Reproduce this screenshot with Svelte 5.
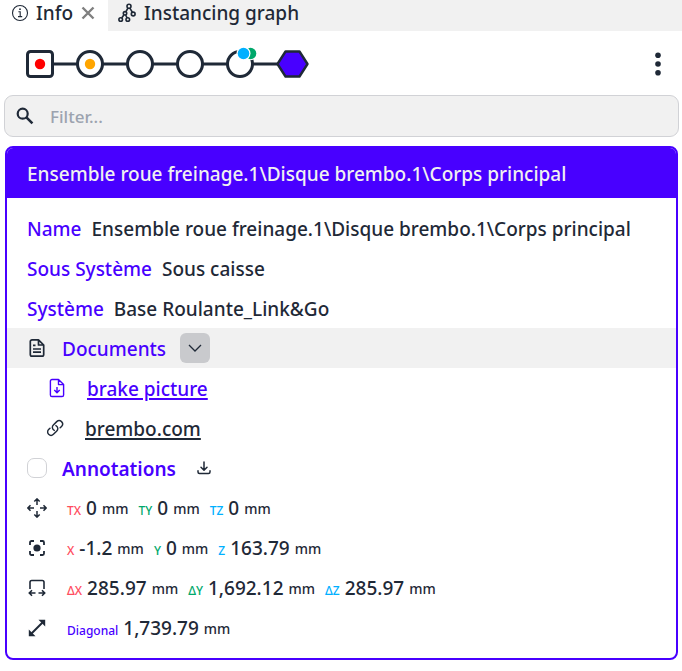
<script>
  let filter = $state('');
  let open = $state(true);
  let annotated = $state(false);

  const title = 'Ensemble roue freinage.1\\Disque brembo.1\\Corps principal';
  const properties = [
    { label: 'Name', value: title },
    { label: 'Sous Système', value: 'Sous caisse' },
    { label: 'Système', value: 'Base Roulante_Link&Go' }
  ];
  const measures = [
    { icon: 'move', values: [['TX', '0', 'red'], ['TY', '0', 'green'], ['TZ', '0', 'blue']] },
    { icon: 'center', values: [['X', '-1.2', 'red'], ['Y', '0', 'green'], ['Z', '163.79', 'blue']] },
    { icon: 'size', values: [['ΔX', '285.97', 'red'], ['ΔY', '1,692.12', 'green'], ['ΔZ', '285.97', 'blue']] },
    { icon: 'diagonal', values: [['Diagonal', '1,739.79', 'violet']] }
  ];
</script>

<main>
  <nav class="tabs">
    <div class="tab active">
      <svg width="18" height="18" viewBox="0 0 18 18" fill="none" stroke="currentColor">
        <circle cx="9" cy="9" r="7.5" stroke-width="1.1" />
        <path d="M7.4 7.8h1.8v4.7M7 12.6h4.2" stroke-width="1.1" />
        <circle cx="9" cy="5.2" r=".9" fill="currentColor" stroke="none" />
      </svg>
      <button class="tab-name">Info</button>
      <button class="close" aria-label="Close Info">
        <svg width="14" height="14" viewBox="0 0 14 14" fill="none" stroke="currentColor" stroke-width="2.4"><path d="M1.5 1.5l11 11M12.5 1.5l-11 11" /></svg>
      </button>
    </div>
    <button class="tab">
      <svg width="18" height="20" viewBox="0 0 18 20" fill="none" stroke="currentColor" stroke-width="1.6">
        <circle cx="11" cy="3.3" r="2" /><circle cx="7" cy="10.3" r="1.7" /><circle cx="15.2" cy="11" r="1.9" /><circle cx="2.7" cy="16.5" r="1.8" /><circle cx="9.8" cy="16.5" r="1.8" />
        <path d="M10 5L7.8 8.8M11.8 5.1l2.6 4.1M6 11.7l-2.3 3.3M7.6 12l1.5 2.9" />
      </svg>
      <span>Instancing graph</span>
    </button>
  </nav>

  <section class="path">
    <svg width="284" height="36" viewBox="0 0 284 36" fill="#fff" stroke="#1f2937" stroke-width="3" role="img" aria-label="Instance path">
      <path d="M27 18h230" />
      <rect x="2.5" y="5.5" width="25" height="25" rx="3" />
      <circle cx="65" cy="18" r="12.5" /><circle cx="115" cy="18" r="12.5" /><circle cx="165" cy="18" r="12.5" /><circle cx="215" cy="18" r="12.5" />
      <path d="M260.5 5.5h14l8 12.5-8 12.5h-14l-8-12.5z" fill="#4800ff" stroke-width="2.4" stroke-linejoin="round" />
      <g stroke="none">
        <circle cx="15" cy="18" r="5.2" fill="#f00" /><circle cx="65" cy="18" r="5.2" fill="orange" />
        <circle cx="225.5" cy="7.5" r="6.8" /><circle cx="225.5" cy="7.5" r="5.8" fill="#00a86b" />
        <circle cx="218.5" cy="7.5" r="7" /><circle cx="218.5" cy="7.5" r="5.8" fill="#00b0ff" />
      </g>
    </svg>
    <button class="more" aria-label="More options">
      <svg width="6" height="24" viewBox="0 0 6 24" fill="currentColor"><circle cx="3" cy="3.2" r="2.8" /><circle cx="3" cy="12" r="2.8" /><circle cx="3" cy="20.8" r="2.8" /></svg>
    </button>
  </section>

  <label class="filter">
    <svg width="18" height="18" viewBox="0 0 18 18" fill="none" stroke="currentColor" stroke-width="2.2"><circle cx="6.7" cy="6.7" r="5" /><path d="M10.4 10.4l6 6" stroke-width="2.6" /></svg>
    <input type="text" placeholder="Filter..." aria-label="Filter" bind:value={filter} />
  </label>

  <article class="card">
    <header>{title}</header>
    <div class="rows">
      {#each properties as p}
        <div class="row"><span class="key">{p.label}</span><span class="text">{p.value}</span></div>
      {/each}

      <div class="row shaded">
        <span class="icon">
          <svg width="20" height="20" viewBox="0 0 20 20" fill="none" stroke="currentColor" stroke-width="1.7" stroke-linejoin="round"><path d="M11.5 1.8H5a1.7 1.7 0 0 0-1.7 1.7v13A1.7 1.7 0 0 0 5 18.2h10a1.7 1.7 0 0 0 1.7-1.7V7zM11.5 1.8V7h5.2M6 7.3h2.5M6 11h8M6 14.2h8" /></svg>
        </span>
        <span class="key">Documents</span>
        <button class="toggle" aria-label="Toggle documents" aria-expanded={open} onclick={() => (open = !open)}>
          <svg width="14" height="8" viewBox="0 0 14 8" fill="none" stroke="currentColor" stroke-width="1.3"><path d="M1 1l6 6 6-6" /></svg>
        </button>
      </div>

      {#if open}
        <div class="row nested">
          <span class="icon violet">
            <svg width="20" height="20" viewBox="0 0 20 20" fill="none" stroke="currentColor" stroke-width="1.4" stroke-linejoin="round"><path d="M11.5 1.5H5A1.6 1.6 0 0 0 3.4 3.1v13.8A1.6 1.6 0 0 0 5 18.5h10a1.6 1.6 0 0 0 1.6-1.6V6.6zM11.5 1.5v5.1h5.1M10 9v5.5M7.3 12l2.7 2.7 2.7-2.7" /></svg>
          </span>
          <a class="violet" href="#brake-picture">brake picture</a>
        </div>
        <div class="row nested link">
          <span class="icon">
            <svg width="18" height="18" viewBox="0 0 24 24" fill="none" stroke="currentColor" stroke-width="1.9" stroke-linecap="round"><path d="M13.2 8.7a4.5 4.5 0 0 1 1.2 7.2l-4.5 4.5a4.5 4.5 0 0 1-6.4-6.4l1.8-1.8M18.9 11.7l1.8-1.8a4.5 4.5 0 0 0-6.4-6.4L9.8 8a4.5 4.5 0 0 0 1.2 7.2" /></svg>
          </span>
          <a href="#brembo">brembo.com</a>
        </div>
      {/if}

      <div class="row">
        <span class="icon"><input id="annotations" type="checkbox" bind:checked={annotated} /></span>
        <label class="key strong" for="annotations">Annotations</label>
        <button class="download" aria-label="Download annotations">
          <svg width="14" height="14" viewBox="0 0 14 14" fill="none" stroke="currentColor" stroke-width="1.5" stroke-linecap="round" stroke-linejoin="round"><path d="M7 1v8M4 6.3L7 9.2l3-2.9M1 9.8v1.3c0 .9.6 1.5 1.5 1.5h9c.9 0 1.5-.6 1.5-1.5V9.8" /></svg>
        </button>
      </div>

      {#each measures as m}
        <div class="row measure">
          <span class="icon">
            <svg width="20" height="20" viewBox="0 0 20 20" fill="none" stroke="currentColor" stroke-width="1.5">
              {#if m.icon === 'move'}
                <path d="M10 7V1M7.3 3.5L10 .9l2.7 2.6M10 13v6M7.3 16.5l2.7 2.6 2.7-2.6M7 10H1M3.5 7.3L.9 10l2.6 2.7M13 10h6M16.5 7.3l2.6 2.7-2.6 2.7" />
              {:else if m.icon === 'center'}
                <path d="M3 7V4.5A1.5 1.5 0 0 1 4.5 3H7M13 3h2.5A1.5 1.5 0 0 1 17 4.5V7M17 13v2.5a1.5 1.5 0 0 1-1.5 1.5H13M7 17H4.5A1.5 1.5 0 0 1 3 15.5V13" stroke-width="1.8" /><circle cx="10" cy="10" r="3.6" fill="currentColor" stroke="none" />
              {:else if m.icon === 'size'}
                <path d="M3 11V4.2A1.7 1.7 0 0 1 4.7 2.5h10.6A1.7 1.7 0 0 1 17 4.2V11M2.5 15H8.5M11.5 15h6M5 12.3L2.3 15 5 17.7M15 12.3l2.7 2.7-2.7 2.7" stroke-width="1.6" />
              {:else}
                <path d="M4 16L16 4" stroke-width="2" /><path d="M11.5 1.8h6.7v6.7zM1.8 11.5v6.7h6.7z" fill="currentColor" stroke="none" />
              {/if}
            </svg>
          </span>
          {#each m.values as [axis, value, color]}
            <span class="value"><small class={color}>{axis}</small><span>{value}</span><span class="unit">mm</span></span>
          {/each}
        </div>
      {/each}
    </div>
  </article>
</main>

<style>
  :global(body) { margin: 0; background: #fff; }
  main {
    color: #1f2937;
    font: 500 19px/26px "Segoe UI", "Noto Sans", "Open Sans", sans-serif;
  }
  button {
    display: flex; align-items: center; justify-content: center;
    padding: 0; border: 0; background: none; color: inherit; font: inherit; cursor: pointer;
  }
  svg { display: block; flex: none; }
  .tabs { display: flex; height: 31px; background: #f1f1f1; }
  .tab { display: flex; align-items: center; gap: 8px; padding: 0 10px 6px; }
  .active { gap: 7px; padding: 0 13px 6px 11px; background: #fff; }
  .close { margin-left: 1px; color: #808080; }
  .path { display: flex; align-items: center; justify-content: space-between; height: 64px; padding: 1px 21px 0 25px; box-sizing: border-box; }
  .filter {
    display: flex; align-items: center; gap: 16px; box-sizing: border-box; height: 42px;
    margin: 0 3px 9px 4px; padding: 0 11px; border: 1px solid #d1d2d6; border-radius: 9px; background: #f1f1f1;
  }
  .filter input {
    flex: 1; min-width: 0; padding: 2px 0 0; border: 0; outline: 0; background: none; color: inherit;
    font: inherit; font-size: 17px;
  }
  .filter input::placeholder { color: #9ca3af; opacity: 1; }
  .card { margin: 0 4px 0 5px; border: 2px solid #4800ff; border-radius: 8px; overflow: hidden; }
  header { padding: 13px 20px 11px; background: #4800ff; color: #f1f1f1; }
  .rows { padding: 10px 0; }
  .row { display: flex; align-items: center; gap: 10px; height: 40px; padding: 0 20px; }
  .shaded { background: #f1f1f1; }
  .nested { padding-left: 40px; }
  .nested .icon { margin-right: 10px; }
  .link { padding-left: 38px; }
  .icon { display: flex; justify-content: center; width: 20px; margin-right: 5px; }
  .key, .violet { color: #4800ff; }
  .key, .text, .value, a { padding-top: 2px; }
  .strong { font-weight: 600; }
  a { color: inherit; text-decoration: underline; text-decoration-thickness: 2px; text-underline-offset: 2px; }
  .toggle { width: 30px; height: 30px; margin-left: 4px; border-radius: 6px; background: #c9cacd; }
  input[type="checkbox"] {
    appearance: none; box-sizing: border-box; width: 20px; height: 20px; margin: 0; border: 1px solid #d1d2d6; border-radius: 7px; background: #fff;
  }
  input[type="checkbox"]:checked { background: #4800ff; }
  .download { margin-left: 11px; }
  .value { display: flex; align-items: baseline; gap: 5px; }
  .measure .icon { margin-right: 10px; }
  small { font-size: 12px; }
  .unit { align-self: center; font-size: 14px; }
  .red { color: #ff4d5e; }
  .green { color: #00a86b; }
  .blue { color: #00b0ff; }
</style>
